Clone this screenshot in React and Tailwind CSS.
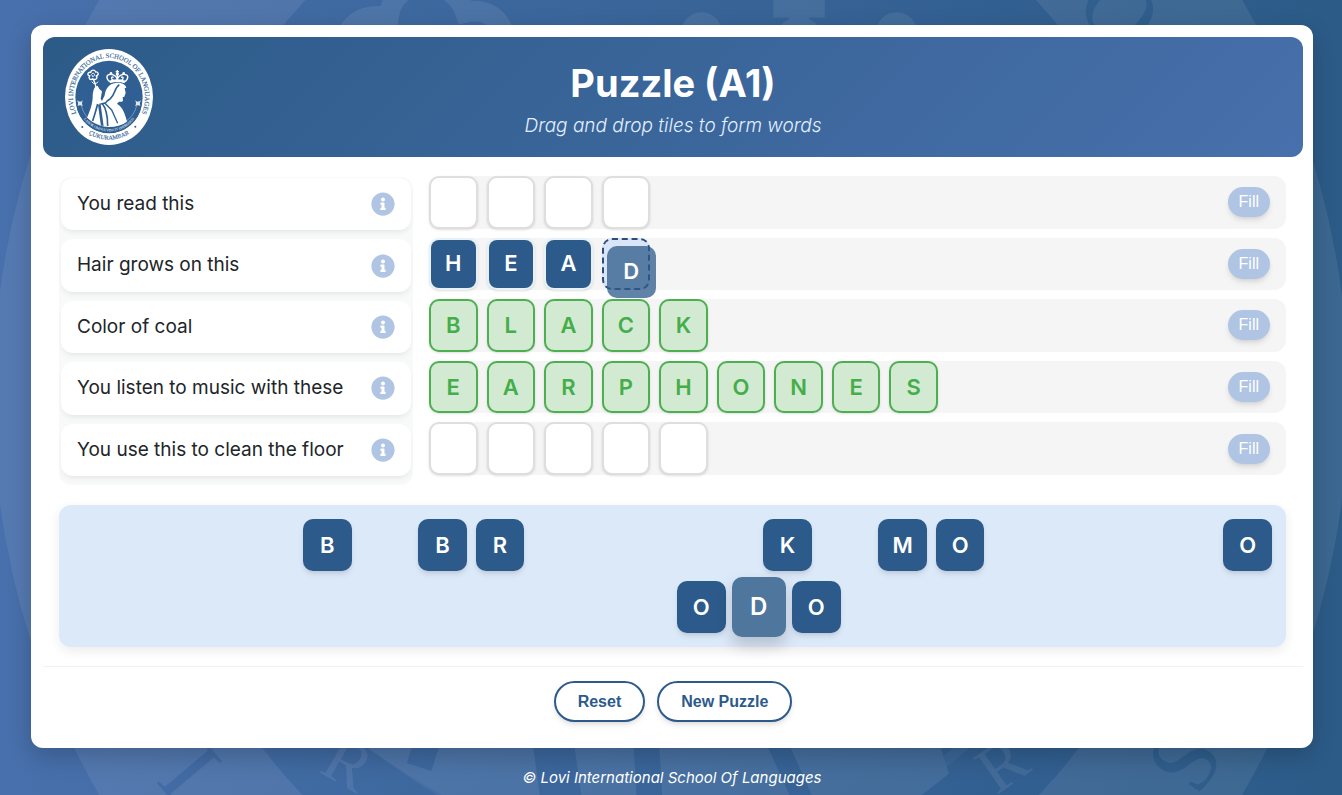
import React from 'react';
import clsx from 'clsx';
import { FaInfoCircle } from 'react-icons/fa';

const CLUES = [
    { text: 'You read this', slots: 4, letters: '', state: 'open' },
    { text: 'Hair grows on this', slots: 4, letters: 'HEA', state: 'open', over: 3, dragging: 'D' },
    { text: 'Color of coal', slots: 5, letters: 'BLACK', state: 'solved' },
    { text: 'You listen to music with these', slots: 9, letters: 'EARPHONES', state: 'solved' },
    { text: 'You use this to clean the floor', slots: 5, letters: '', state: 'open' },
];

const TRAY = [
    { letter: 'B', row: 1, col: 8 },
    { letter: 'B', row: 1, col: 12 },
    { letter: 'R', row: 1, col: 14 },
    { letter: 'K', row: 1, col: 24 },
    { letter: 'M', row: 1, col: 28 },
    { letter: 'O', row: 1, col: 30 },
    { letter: 'O', row: 1, col: 40 },
    { letter: 'O', row: 2, col: 21 },
    { letter: 'D', row: 2, col: 23, dragged: true },
    { letter: 'O', row: 2, col: 25 },
];

const SealLettering = () => (
    <g fontFamily="'Liberation Serif', serif" textAnchor="middle">
        <defs>
            <path id="seal-top" d="M 42 210 A 108 118 0 1 1 222 210" />
            <path id="seal-bottom" d="M 30 211 A 121 132 0 0 0 234 211" />
            <path id="seal-ribbon" d="M 37 165 A 96 96 0 0 0 227 165" />
        </defs>
        <text fontSize="20" fill="#2f5f93" stroke="#2f5f93" strokeWidth="0.4">
            <textPath href="#seal-top" startOffset="50%">LOVI INTERNATIONAL SCHOOL OF LANGUAGES</textPath>
        </text>
        <text fontSize="18" fill="#2f5f93" stroke="#2f5f93" strokeWidth="0.4">
            <textPath href="#seal-bottom" startOffset="50%">ÇUKURAMBAR</textPath>
        </text>
        <text fontSize="11" fill="#fff">
            <textPath href="#seal-ribbon" startOffset="50%">LABOR OMNIA VINCIT IMPROBUS</textPath>
        </text>
    </g>
);

// Only the letters that show past the edges of the card
const WatermarkLettering = () => (
    <g fontFamily="'Liberation Serif', serif" textAnchor="middle">
        <text transform="translate(67 219) rotate(30)" fontSize="13" fill="#fff">R</text>
        <text transform="translate(199 219) rotate(-35)" fontSize="13" fill="#fff">R</text>
        <text transform="translate(227 211) rotate(125)" fontSize="19" fill="#2f5f93">S</text>
        <text transform="translate(43 213) rotate(-130)" fontSize="19" fill="#2f5f93">I</text>
        <text transform="translate(215 73) rotate(45)" fontSize="19" fill="#2f5f93">O</text>
    </g>
);

const Seal = ({ className, children }) => (
    <svg viewBox="0 0 264 288" className={className} aria-hidden="true">
        <ellipse cx="132" cy="144" rx="132" ry="144" fill="#fff" />
        <ellipse cx="132" cy="144" rx="101" ry="109" fill="#2f5f93" />
        <circle cx="52" cy="234" r="3" fill="#2f5f93" />
        <circle cx="211" cy="233" r="3" fill="#2f5f93" />

        {/* crown */}
        <g fill="none" stroke="#fff" strokeWidth="4">
            <path d="M134 98 C121 86 124 76 137 76 C149 76 157 85 157 94 C157 85 165 76 177 76 C190 76 193 86 180 98" />
            <path d="M144 95 C137 87 139 82 146 85 M170 95 C177 87 175 82 168 85" />
            <path d="M157 63 V94 M152 68 H162" />
            <path d="M134 99 Q157 91 180 99" strokeWidth="8" />
        </g>
        <g fill="#fff">
            <circle cx="138" cy="73" r="4" />
            <circle cx="157" cy="75" r="5" />
            <circle cx="176" cy="73" r="4" />
        </g>

        {/* rose */}
        <g fill="none" stroke="#fff" strokeWidth="4">
            <path d="M77 70 C67 68 66 80 74 81 C69 87 76 96 83 89 C91 95 99 88 94 81 C103 78 100 67 92 69 C89 61 78 62 77 70Z" />
            <path d="M79 77 C82 70 91 73 88 79 C86 85 79 83 82 78" strokeWidth="3" />
            <path d="M85 91 Q91 102 93 116" />
            <path d="M80 98 Q91 111 99 98" strokeWidth="3" />
        </g>

        {/* figure */}
        <path fill="#fff" d="M91 113 L98 110 L103 120 L111 127 L107 149 L111 156 L119 139 C121 119 133 104 151 102 C169 99 182 107 184 116 L179 118 L182 132 L178 143 L173 145 L174 155 Q171 160 162 158 L156 164 C169 172 177 185 182 204 L187 220 Q162 234 130 234 Q97 232 66 207 L77 178 Q84 153 83 140 Q84 121 91 113Z" />
        <g fill="none" stroke="#2f5f93" strokeWidth="5">
            <path d="M163 107 C147 118 151 136 136 149 Q125 155 120 164" />
            <path d="M98 165 Q92 188 83 216" />
            <path d="M103 167 L112 232" strokeWidth="8" />
            <path d="M111 163 Q128 183 128 231" />
            <path d="M103 166 L119 162 L140 183 L158 223" strokeWidth="4" />
        </g>

        {/* ribbon */}
        <path d="M41 166 A92 92 0 0 0 223 166" fill="none" stroke="#2f5f93" strokeWidth="15" />
        <path d="M49 170 A85 80 0 0 0 215 170" fill="none" stroke="#fff" strokeOpacity="0.5" strokeWidth="2" />
        <path d="M36 154 q10 8 18 0 q-6 8 0 18 q-9 -6 -16 -1 q4 -9 -2 -17z M228 154 q-10 8 -18 0 q6 8 0 18 q9 -6 16 -1 q-4 -9 2 -17z" fill="#fff" fillOpacity="0.85" />
        {children}
    </svg>
);

const Slot = ({ letter, state, isOver, dragging }) => {
    if (state === 'solved') {
        return (
            <div className="flex items-center justify-center rounded-[10px] border-2 border-[#4caf50] bg-[#d2ead2] text-[22px] font-semibold text-[#45ad49] shadow-sm">
                {letter}
            </div>
        );
    }
    return (
        <div
            className={clsx(
                'relative grid rounded-[10px] border-2',
                isOver && 'border-dashed border-[#2a4d7c] bg-[#d9e5f7]',
                !isOver && 'bg-white shadow-sm',
                !isOver && (letter ? 'border-[#e8f0f8]' : 'border-[#dedede]')
            )}
        >
            {letter && (
                <div draggable className="flex items-center justify-center rounded-lg bg-[#2c5a8a] text-[22px] font-semibold text-white">
                    {letter}
                </div>
            )}
            {dragging && (
                <div className="absolute top-1.5 left-[3px] z-10 flex h-[52px] w-[49px] items-center justify-center rounded-[10px] bg-[#2c5a8a]/75 text-[22px] font-semibold text-white">
                    {dragging}
                </div>
            )}
        </div>
    );
};

const WordRow = ({ clue }) => (
    <div className="flex items-stretch justify-between rounded-xl bg-[#f5f5f5] pr-4">
        <div className="grid w-[509px] grid-cols-9 gap-[9px]">
            {Array.from({ length: clue.slots }, (_, i) => (
                <Slot
                    key={i}
                    letter={clue.letters[i]}
                    state={clue.state}
                    isOver={clue.over === i}
                    dragging={clue.over === i ? clue.dragging : null}
                />
            ))}
        </div>
        <button
            type="button"
            aria-label={`Fill: ${clue.text}`}
            className="h-[30px] self-center rounded-full bg-[#b0c4e4] px-[11px] font-['Liberation_Sans',sans-serif] text-base text-white shadow-md shadow-black/10"
        >
            Fill
        </button>
    </div>
);

const TrayTile = ({ tile }) => (
    <div
        className="relative col-span-2 h-[52px] pr-[9px]"
        style={{ gridRowStart: tile.row, gridColumnStart: tile.col + 1 }}
    >
        {tile.dragged ? (
            <div className="absolute -inset-y-1 right-1.5 -left-[3px] flex items-center justify-center rounded-[10px] bg-[#4f769c] text-2xl font-semibold text-white shadow-[0_8px_16px_rgba(0,0,0,0.18)]">
                {tile.letter}
            </div>
        ) : (
            <div draggable className="flex h-full items-center justify-center rounded-[10px] bg-[#2c5a8a] text-[22px] font-semibold text-white shadow-md shadow-black/10">
                {tile.letter}
            </div>
        )}
    </div>
);

const ActionButton = ({ children }) => (
    <button
        type="button"
        className="h-[41px] rounded-full border-2 border-[#2c5a8a] bg-white px-[22px] font-['Liberation_Sans',sans-serif] text-base font-bold text-[#2c5a8a] shadow-md shadow-black/10"
    >
        {children}
    </button>
);

export default function App() {
    return (
        <div className="relative isolate min-h-screen overflow-hidden bg-linear-to-r from-[#4870ac] to-[#2c5b88] pt-[25px] pr-[29px] pl-[31px] font-[Inter,sans-serif]">
            {/* Watermark */}
            <div className="absolute inset-0 -z-10 flex items-center justify-center opacity-7">
                <Seal className="w-[101%] flex-none">
                    <WatermarkLettering />
                </Seal>
            </div>

            <main className="rounded-xl bg-white pt-3 pr-2.5 pb-[26px] pl-3 shadow-[0_8px_24px_rgba(0,0,0,0.2)]">
                <header className="grid h-[120px] grid-cols-[88px_1fr_88px] items-center rounded-xl bg-linear-135 from-[#2c5b88] to-[#4870ac] px-[22px]">
                    <Seal className="w-full">
                        <SealLettering />
                    </Seal>
                    <div className="pt-3.5 text-center">
                        <h1 className="text-[38px] leading-[44px] font-bold text-white">Puzzle (A1)</h1>
                        <p className="text-[19px] leading-[42px] font-light text-[#e3efff] italic">Drag and drop tiles to form words</p>
                    </div>
                </header>

                <div className="mt-[19px] pr-[17px] pl-4">
                    <div className="flex items-start gap-4">
                        <ul className="mt-px grid min-h-[308px] w-[354px] flex-none grid-rows-5 gap-[9px] rounded-xl bg-[#f8f9f9] px-0.5 pt-px pb-[9px]">
                            {CLUES.map((clue) => (
                                <li key={clue.text} className="flex items-center justify-between rounded-xl bg-white px-4 shadow-md shadow-black/5">
                                    <span className="text-[19px] text-[#212529]">{clue.text}</span>
                                    <button type="button" aria-label={`Hint: ${clue.text}`} className="text-[#b0c4e4]">
                                        <FaInfoCircle size={24} />
                                    </button>
                                </li>
                            ))}
                        </ul>
                        <div className="grid min-h-[299px] flex-1 grid-rows-5 gap-[9px]">
                            {CLUES.map((clue) => (
                                <WordRow key={clue.text} clue={clue} />
                            ))}
                        </div>
                    </div>

                    <div className="mt-5 rounded-xl bg-[#dce9f9] py-3.5 pr-[5px] pl-3.5 shadow-[0_4px_12px_rgba(0,0,0,0.08)]">
                        <div className="grid grid-cols-[repeat(42,minmax(0,1fr))] gap-y-2.5">
                            {TRAY.map((tile) => (
                                <TrayTile key={`${tile.row}-${tile.col}`} tile={tile} />
                            ))}
                        </div>
                    </div>
                </div>

                <div className="mt-[19px] flex justify-center gap-3 border-t border-[#f1f1f1] pt-3.5">
                    <ActionButton>Reset</ActionButton>
                    <ActionButton>New Puzzle</ActionButton>
                </div>
            </main>

            <footer className="mt-[18px] text-center text-[15px] leading-6 text-white italic">
                © Lovi International School Of Languages
            </footer>
        </div>
    );
}
